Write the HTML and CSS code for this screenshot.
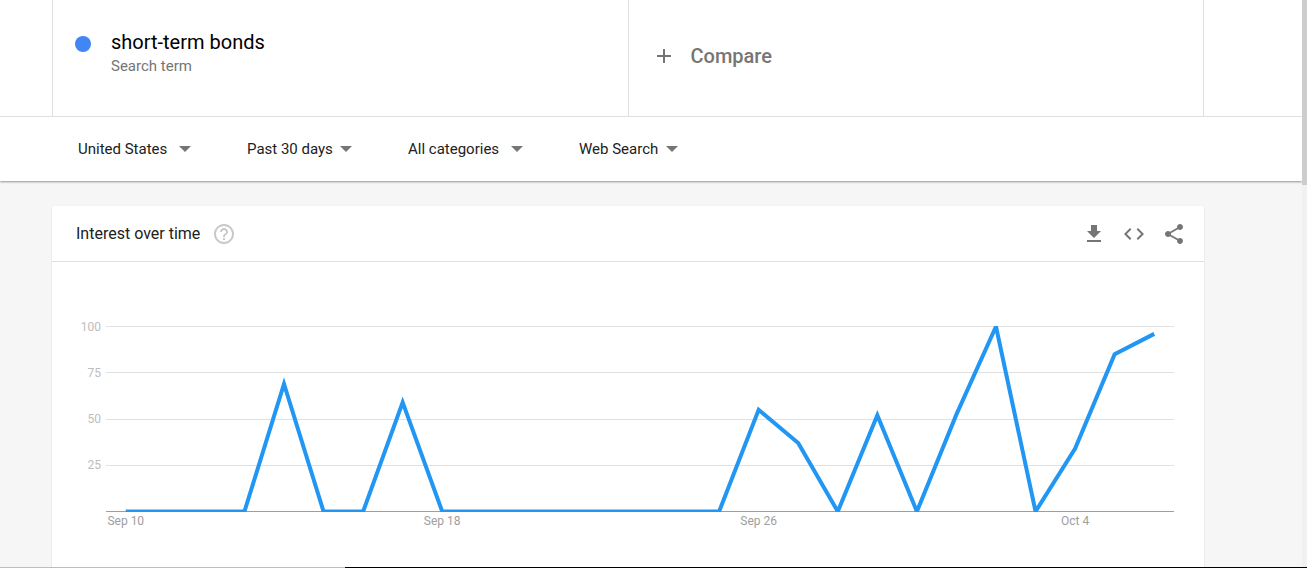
FILE: index.html
```html
<!DOCTYPE html>
<html lang="en">
<head>
    <meta charset="UTF-8">
    <meta name="viewport" content="width=device-width, initial-scale=1.0">
    <title>short-term bonds - Explore</title>
    <link rel="stylesheet" href="styles.css">
</head>
<body>

<div class="window">
    <div class="page">
        <header class="top">
            <div class="terms-row">
                <div class="terms">
                    <div class="term">
                        <span class="dot"></span>
                        <div>
                            <h1 class="term-title">short-term bonds</h1>
                            <div class="term-type">Search term</div>
                        </div>
                    </div>
                    <button class="compare" type="button">
                        <svg class="icon" viewBox="0 0 24 24"><path d="M19 13h-6v6h-2v-6H5v-2h6V5h2v6h6z"/></svg>
                        Compare
                    </button>
                </div>
            </div>

            <div class="filters">
                <div class="filter">
                    <select class="filter-select wide" aria-label="Region">
                        <option>United States</option>
                    </select>
                    <span class="arrow"></span>
                </div>
                <div class="filter">
                    <select class="filter-select" aria-label="Time range">
                        <option>Past 30 days</option>
                    </select>
                    <span class="arrow"></span>
                </div>
                <div class="filter">
                    <select class="filter-select wide" aria-label="Category">
                        <option>All categories</option>
                    </select>
                    <span class="arrow"></span>
                </div>
                <div class="filter">
                    <select class="filter-select" aria-label="Search type">
                        <option>Web Search</option>
                    </select>
                    <span class="arrow"></span>
                </div>
            </div>
        </header>

        <main class="content">
            <section class="card">
                <div class="card-header">
                    <h2 class="card-title">Interest over time</h2>
                    <button class="icon-button help" type="button" aria-label="Help">
                        <svg class="icon" viewBox="0 0 24 24"><path d="M11 18h2v-2h-2v2zm1-16C6.480 2 2 6.480 2 12s4.480 10 10 10 10-4.480 10-10S17.520 2 12 2zm0 18c-4.410 0-8-3.590-8-8s3.590-8 8-8 8 3.590 8 8-3.590 8-8 8zm0-14c-2.210 0-4 1.790-4 4h2c0-1.100.9-2 2-2s2 .9 2 2c0 2-3 1.750-3 5h2c0-2.250 3-2.500 3-5 0-2.210-1.790-4-4-4z"/></svg>
                    </button>
                    <div class="actions">
                        <button class="icon-button" type="button" aria-label="Download">
                            <svg class="icon" viewBox="0 0 24 24"><path d="M19 9h-4V3H9v6H5l7 7 7-7zM5 18v2h14v-2H5z"/></svg>
                        </button>
                        <button class="icon-button" type="button" aria-label="Embed">
                            <svg class="icon" viewBox="0 0 24 24"><path d="M9.400 16.600L4.800 12l4.600-4.600L8 6l-6 6 6 6 1.400-1.400zm5.200 0l4.600-4.600-4.600-4.600L16 6l6 6-6 6-1.400-1.400z"/></svg>
                        </button>
                        <button class="icon-button" type="button" aria-label="Share">
                            <svg class="icon" viewBox="0 0 24 24"><path d="M18 16.080c-.76 0-1.440.3-1.960.77L8.910 12.700c.05-.23.09-.46.09-.7s-.04-.47-.09-.7l7.050-4.110c.54.5 1.250.81 2.040.81 1.660 0 3-1.340 3-3s-1.340-3-3-3-3 1.340-3 3c0 .24.04.47.09.7L8.040 9.810C7.500 9.310 6.790 9 6 9c-1.660 0-3 1.340-3 3s1.340 3 3 3c.79 0 1.500-.31 2.040-.81l7.120 4.160c-.05.21-.08.43-.08.65 0 1.610 1.310 2.920 2.920 2.920s2.920-1.310 2.920-2.920-1.310-2.920-2.920-2.920z"/></svg>
                        </button>
                    </div>
                </div>

                <div class="chart">
                    <div class="y-axis">
                        <span>100</span>
                        <span>75</span>
                        <span>50</span>
                        <span>25</span>
                    </div>
                    <!-- one x unit per day -->
                    <svg class="plot" viewBox="0 0 27 186" preserveAspectRatio="none">
                        <path class="grid-line" d="M0 .5H27M0 46.5H27M0 93.5H27M0 139.5H27"/>
                        <path class="base-line" d="M0 185.5H27"/>
                        <polyline class="series" points="0.5,185.5 3.5,185.5 4.5,57.9 5.5,185.5 6.5,185.5 7.5,76.4 8.5,185.5 15.5,185.5 16.5,83.8 17.5,117 18.5,185.5 19.5,89.3 20.5,185.5 21.5,88.4 22.5,0.5 23.5,185.5 24.5,122.6 25.5,28.3 26.5,7.9"/>
                    </svg>
                    <div class="x-axis">
                        <span class="day-1">Sep 10</span>
                        <span class="day-9">Sep 18</span>
                        <span class="day-17">Sep 26</span>
                        <span class="day-25">Oct 4</span>
                    </div>
                </div>
            </section>
        </main>
    </div>

    <div class="scrollbar"><div class="thumb"></div></div>
</div>

<div class="bottom-edge"></div>

</body>
</html>
```
FILE: styles.css
```css
* {
    box-sizing: border-box;
}
body {
    margin: 0;
    height: 100vh;
    display: flex;
    flex-direction: column;
    overflow: hidden;
    background: #f6f6f6;
    color: #212121;
    font-family: Roboto, "Liberation Sans", sans-serif;
    font-size: 15px;
}
button, select {
    font: inherit;
    color: inherit;
    background: none;
    border: 0;
    padding: 0;
    cursor: pointer;
}
h1, h2 {
    margin: 0;
    font-weight: 400;
}
.window {
    flex: 1;
    min-height: 0;
    display: flex;
}
.page {
    flex: 1;
    min-width: 0;
    overflow: hidden;
}
.icon {
    display: block;
    width: 24px;
    height: 24px;
    fill: currentColor;
}

/* search terms */
.top {
    background: #fff;
    box-shadow: 0 1px 2px rgba(0, 0, 0, 0.4);
}
.terms-row {
    padding: 0 98px 0 52px;
    border-bottom: 1px solid #e0e0e0;
}
.terms {
    display: grid;
    grid-template-columns: 1fr 1fr;
    min-height: 116px;
    border-right: 1px solid #e0e0e0;
}
.term, .compare {
    display: flex;
    align-items: flex-start;
    border-left: 1px solid #e0e0e0;
    line-height: 24px;
}
.term {
    gap: 20px;
    padding: 30px 22px;
}
.dot {
    width: 16px;
    height: 16px;
    margin-top: 6px;
    border-radius: 50%;
    background: #4285f4;
}
.term-title {
    font-size: 20px;
    color: #000;
}
.term-type {
    color: #757575;
}
.compare {
    gap: 15px;
    padding: 44px 23px;
    color: #757575;
    font-size: 20px;
    font-weight: 500;
}

/* filters */
.filters {
    display: flex;
    gap: 56px;
    padding: 20px 78px;
}
.filter {
    position: relative;
}
.filter-select {
    appearance: none;
    height: 24px;
    padding-right: 19px;
    outline: none;
}
.filter-select.wide {
    padding-right: 23px;
}
.arrow {
    position: absolute;
    right: 0;
    top: 9px;
    border: 6px solid transparent;
    border-top-color: #757575;
    border-bottom: 0;
    pointer-events: none;
}

/* card */
.content {
    padding: 25px 98px 0 52px;
}
.card {
    background: #fff;
    border-radius: 2px;
    box-shadow: 0 1px 2px rgba(0, 0, 0, 0.14);
    padding-bottom: 60px;
}
.card-header {
    display: flex;
    align-items: center;
    gap: 12px;
    height: 56px;
    padding: 0 18px 0 24px;
    border-bottom: 1px solid #e0e0e0;
}
.card-title {
    font-size: 16px;
}
.icon-button {
    color: #757575;
}
.help {
    color: #c8c8c8;
}
.actions {
    display: flex;
    gap: 16px;
    margin-left: auto;
}

/* chart */
.chart {
    display: grid;
    grid-template-columns: 30px 1fr;
    padding: 64px 30px 0 24px;
    font-size: 12px;
    line-height: 16px;
}
.y-axis {
    display: flex;
    flex-direction: column;
    justify-content: space-between;
    height: 154px;
    margin-top: -7px;
    padding-right: 5px;
    text-align: right;
    color: #bdbdbd;
}
.plot {
    display: block;
    width: 100%;
    height: 186px;
    overflow: hidden;
}
.plot path, .plot polyline {
    fill: none;
    vector-effect: non-scaling-stroke;
}
.grid-line {
    stroke: #e0e0e0;
}
.base-line {
    stroke: #9e9e9e;
}
.series {
    stroke: #2196f3;
    stroke-width: 4px;
}
.x-axis {
    grid-column: 2;
    display: grid;
    grid-template-columns: repeat(27, minmax(0, 1fr));
    justify-items: center;
    padding-top: 1px;
    color: #9e9e9e;
    white-space: nowrap;
}
.day-1 {
    grid-column: 1;
}
.day-9 {
    grid-column: 9;
}
.day-17 {
    grid-column: 17;
}
.day-25 {
    grid-column: 25;
}

/* window edges */
.scrollbar {
    width: 5px;
    background: #f1f1f1;
}
.thumb {
    height: 185px;
    background: #cdcdcd;
}
.bottom-edge {
    height: 1px;
    background: linear-gradient(to right, #bdbdbd 345px, #000 345px);
}
```
